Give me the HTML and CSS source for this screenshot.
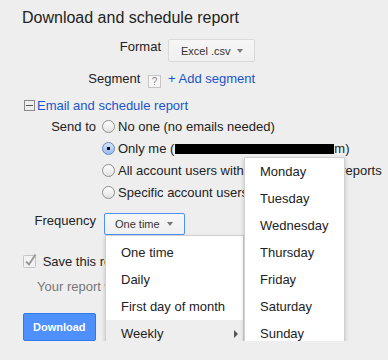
FILE: index.html
```html
<!DOCTYPE html>
<html>
<head>
  <title>Download and schedule report</title>
  <link rel="stylesheet" href="styles.css">
</head>
<body>

<div class="page">
  <h1 class="title">Download and schedule report</h1>

  <div class="row format-row">
    <div class="row-label">Format</div>
    <div class="btn select-btn">Excel .csv <span class="caret"></span></div>
  </div>

  <div class="row segment-row">
    <div class="row-label">Segment <span class="help">?</span></div>
    <a class="link">+ Add segment</a>
  </div>

  <div class="toggle-row">
    <span class="minus-box"></span><a class="link">Email and schedule report</a>
  </div>

  <div class="row send-row">
    <div class="row-label small">Send to</div>
    <div class="radio-list">
      <div class="radio-item"><span class="radio"></span>No one (no emails needed)</div>
      <div class="radio-item"><span class="radio on"></span>Only me (<span class="redact"></span>m)</div>
      <div class="radio-item"><span class="radio"></span>All account users with access to these reports</div>
      <div class="radio-item"><span class="radio"></span>Specific account users</div>
    </div>
  </div>

  <div class="row freq-row">
    <div class="row-label small">Frequency</div>
    <div class="dropdown">
      <div class="btn freq-btn">One time <span class="caret"></span></div>
      <ul class="menu">
        <li>One time</li>
        <li>Daily</li>
        <li>First day of month</li>
        <li class="active">Weekly <span class="sub-arrow"></span></li>
      </ul>
      <ul class="menu submenu">
        <li>Monday</li>
        <li>Tuesday</li>
        <li>Wednesday</li>
        <li>Thursday</li>
        <li>Friday</li>
        <li>Saturday</li>
        <li>Sunday</li>
      </ul>
    </div>
  </div>

  <div class="save-row">
    <svg class="checkbox" width="15" height="15" viewBox="0 0 15 15">
      <rect x="0.5" y="2.5" width="12" height="12" rx="1" fill="#f3f3f3" stroke="#c4c4c4"/>
      <path d="M3 8.5 L6 11.5 L12.5 1.5" fill="none" stroke="#9a9a9a" stroke-width="2"/>
    </svg>
    <span>Save this report to My Reports</span>
  </div>
  <div class="note">Your report will be saved</div>

  <div class="btn download-btn">Download</div>
</div>

</body>
</html>
```

FILE: styles.css
```css
body {
  margin: 0;
  background-color: #eeeeee;
  font-family: "Liberation Sans", Arial, sans-serif;
  font-size: 13px;
  color: #222;
}
.page {
  padding: 9px 0 0 22px;
}
.title {
  margin: 0;
  font-size: 16px;
  font-weight: normal;
  line-height: 18px;
}
.row {
  display: flex;
  align-items: flex-start;
}
.row-label {
  width: 139px;
  margin-right: 7px;
  text-align: right;
  line-height: 15px;
}
.row-label.small {
  width: 74px;
  margin-right: 6px;
}
.link {
  color: #1a55cc;
  text-decoration: none;
  line-height: 15px;
}

.btn {
  box-sizing: border-box;
  border: 1px solid #dadada;
  border-radius: 2px;
  background: linear-gradient(#f6f6f6, #f0f0f0);
  font-size: 11px;
  color: #333;
}
.caret {
  display: inline-block;
  width: 0;
  height: 0;
  margin-left: 3px;
  border-left: 3.5px solid transparent;
  border-right: 3.5px solid transparent;
  border-top: 4px solid #777;
  vertical-align: 2px;
}

.format-row {
  margin-top: 12px;
}
.select-btn {
  height: 23px;
  line-height: 23px;
  padding: 0 11px 0 12px;
}
.segment-row {
  margin-top: 9px;
}
.help {
  display: inline-block;
  box-sizing: border-box;
  width: 13px;
  height: 13px;
  margin-left: 4px;
  border: 1px solid #c4c4c4;
  background: #f7f7f7;
  font-size: 10px;
  line-height: 11px;
  text-align: center;
  color: #888;
  vertical-align: -2px;
}

.toggle-row {
  margin-top: 10px;
  line-height: 15px;
}
.minus-box {
  display: inline-block;
  position: relative;
  box-sizing: border-box;
  width: 11px;
  height: 11px;
  margin: 0 2px 0 2px;
  border: 1px solid #8a8a8a;
  vertical-align: -1px;
}
.minus-box::after {
  content: "";
  position: absolute;
  left: 1px;
  right: 1px;
  top: 4px;
  height: 1px;
  background: #555;
}

.send-row {
  margin-top: 3px;
}
.send-row .row-label {
  line-height: 22px;
}
.radio-item {
  line-height: 22px;
  white-space: nowrap;
}
.radio {
  display: inline-block;
  box-sizing: border-box;
  width: 13px;
  height: 13px;
  margin-right: 3px;
  border: 1px solid #8f8f8f;
  border-radius: 50%;
  background: linear-gradient(#ffffff, #e2e2e2);
  vertical-align: -2px;
}
.radio.on {
  border-color: #6a86b8;
  background: radial-gradient(circle, #111 0 1.5px, transparent 2px), linear-gradient(#d6e4fa, #98bdf0);
}
.redact {
  display: inline-block;
  width: 159px;
  height: 10px;
  margin-left: 1px;
  background: #000;
  vertical-align: -1px;
}

.freq-row {
  margin-top: 9px;
}
.dropdown {
  position: relative;
  margin-left: 2px;
}
.freq-btn {
  height: 22px;
  line-height: 21px;
  padding: 0 11px 0 10px;
  border-color: #4d90fe;
}
.freq-btn .caret {
  margin-left: 4px;
}
.menu {
  position: absolute;
  box-sizing: border-box;
  margin: 0;
  padding: 3px 0 0;
  list-style: none;
  background: #fff;
  border: 1px solid #d0d0d0;
  box-shadow: 0 2px 4px rgba(0, 0, 0, 0.2);
  z-index: 2;
}
.dropdown > .menu {
  left: 1px;
  top: 22px;
  width: 139px;
  height: 113px;
}
.menu li {
  position: relative;
  height: 27px;
  padding-left: 15px;
  line-height: 27px;
  white-space: nowrap;
}
.menu li.active {
  background: #eeeeee;
}
.sub-arrow {
  position: absolute;
  right: 5px;
  top: 10px;
  width: 0;
  height: 0;
  border-top: 4px solid transparent;
  border-bottom: 4px solid transparent;
  border-left: 4px solid #555;
}
.dropdown > .submenu {
  left: 140px;
  top: -56px;
  width: 101px;
  height: 191px;
  padding-top: 0;
}

.save-row {
  margin-top: 18px;
  line-height: 15px;
  white-space: nowrap;
}
.checkbox {
  margin-left: 1px;
  margin-right: 1px;
  vertical-align: -2px;
}
.note {
  margin-top: 10px;
  padding-left: 15px;
  line-height: 15px;
  color: #777;
}
.download-btn {
  display: inline-block;
  height: 28px;
  margin: 19px 0 0 1px;
  padding: 0 9px;
  line-height: 26px;
  background: #4d90fe;
  border-color: #3079ed;
  color: #fff;
  font-weight: bold;
}
```
